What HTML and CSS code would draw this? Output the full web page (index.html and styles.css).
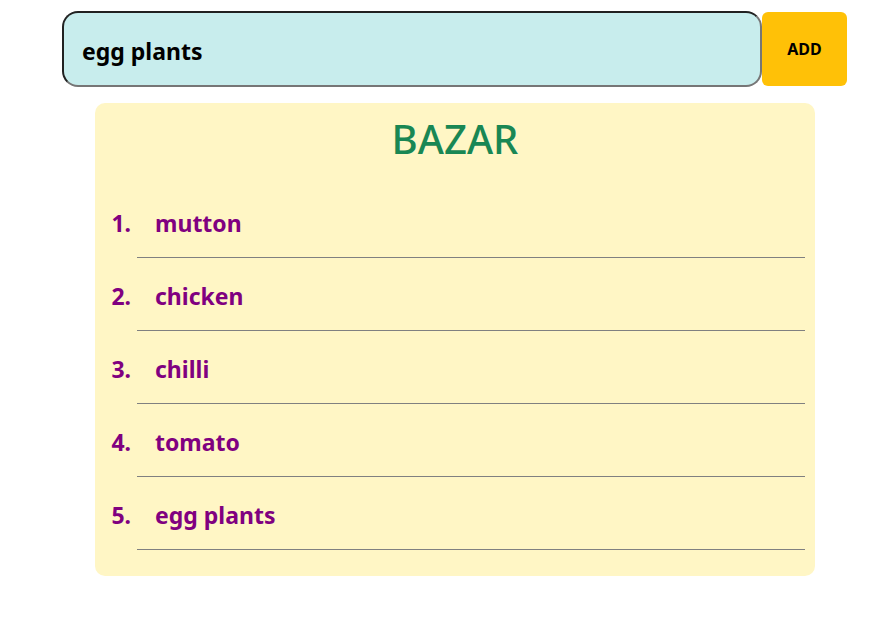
FILE: index.html
```html
<!DOCTYPE html>
<html lang="en">
<head>
<meta charset="utf-8">
<meta name="viewport" content="width=device-width, initial-scale=1">
<title>Bazar</title>
<link rel="stylesheet" href="styles.css">
</head>
<body>
<main class="page">
  <form class="entry">
    <input class="entry-input" type="text" aria-label="Item" value="egg plants">
    <button class="entry-button" type="button">ADD</button>
  </form>
  <section class="card">
    <h1 class="card-title">BAZAR</h1>
    <ol class="items">
      <li class="item">mutton</li>
      <li class="item">chicken</li>
      <li class="item">chilli</li>
      <li class="item">tomato</li>
      <li class="item">egg plants</li>
    </ol>
  </section>
</main>
</body>
</html>
```
FILE: styles.css
```css
* {
  box-sizing: border-box;
}

body {
  margin: 0;
  background: #fff;
  color: #000;
  font-family: "Noto Sans", sans-serif;
}

.page {
  padding: 11px 47px 44px 62px;
}

.entry {
  display: flex;
  align-items: center;
}

.entry-input {
  flex: 1;
  min-width: 0;
  height: 76px;
  padding: 4px 18px 0;
  border: 2px inset #767676;
  border-radius: 16px;
  background: #c8eded;
  color: #000;
  font: 700 23px "Noto Sans", sans-serif;
}

.entry-button {
  width: 85px;
  height: 74px;
  padding: 0;
  border: 0;
  border-radius: 6px;
  background: #ffc107;
  color: #000;
  font: 700 16px "Noto Sans", sans-serif;
}

.card {
  margin: 16px 32px 0 33px;
  padding: 12px 10px 26px;
  border-radius: 10px;
  background: #fff6c5;
}

.card-title {
  margin: 0 0 22px;
  color: #198754;
  font-size: 40px;
  font-weight: 500;
  line-height: 48px;
  text-align: center;
}

.items {
  margin: 0;
  padding: 0 0 0 32px;
}

.item {
  height: 73px;
  padding: 20px 18px 0;
  border-bottom: 1px solid #808080;
  color: #800080;
  font-size: 23px;
  font-weight: 700;
  line-height: 36px;
}
```
